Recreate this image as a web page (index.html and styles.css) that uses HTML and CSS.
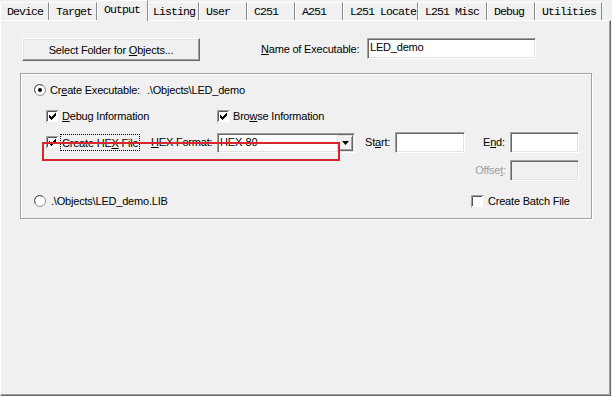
FILE: index.html
```html
<!DOCTYPE html>
<html>
<head>
<meta charset="utf-8">
<title>Options - Output</title>
<link rel="stylesheet" href="styles.css">
</head>
<body>
<div class="dialog">
  <div class="tabs">
    <div class="tab t-device">Device</div>
    <div class="tab t-target">Target</div>
    <div class="tab t-output active">Output</div>
    <div class="tab t-listing">Listing</div>
    <div class="tab t-user">User</div>
    <div class="tab t-c251">C251</div>
    <div class="tab t-a251">A251</div>
    <div class="tab t-locate">L251 Locate</div>
    <div class="tab t-misc">L251 Misc</div>
    <div class="tab t-debug">Debug</div>
    <div class="tab t-util">Utilities</div>
  </div>
  <div class="panel">
    <div class="top-row">
      <button class="btn">Select Folder for <u>O</u>bjects...</button>
      <span class="name-label"><u>N</u>ame of Executable:</span>
      <div class="field name-field">LED_demo</div>
    </div>
    <div class="group">
      <div class="radio-row">
        <svg class="radio" width="12" height="12" viewBox="0 0 12 12"><circle cx="6" cy="6" r="5.5" fill="#fff" stroke="#8f8f8f"/><path d="M1.5 8.5A5 5 0 0 1 8.5 1.5" fill="none" stroke="#5a5a5a"/><circle cx="6" cy="6" r="2" fill="#000"/></svg>
        <span class="exe-label">Cr<u>e</u>ate Executable:</span>
        <span>.\Objects\LED_demo</span>
      </div>
      <div class="opts">
        <div class="check c-debug">
          <svg width="13" height="13" viewBox="0 0 13 13"><rect x="1" y="1" width="11" height="11" fill="#fff"/><path d="M0.5 12.5V0.5H12.5" fill="none" stroke="#a0a0a0"/><path d="M1.5 11V1.5H11" fill="none" stroke="#555"/><path d="M3 5h1v3h-1zM4 6h1v3h-1zM5 7h1v3h-1zM6 6h1v3h-1zM7 5h1v3h-1zM8 4h1v3h-1zM9 3h1v3h-1z" fill="#000"/></svg>
          <span><u>D</u>ebug Information</span>
        </div>
        <div class="check c-browse">
          <svg width="13" height="13" viewBox="0 0 13 13"><rect x="1" y="1" width="11" height="11" fill="#fff"/><path d="M0.5 12.5V0.5H12.5" fill="none" stroke="#a0a0a0"/><path d="M1.5 11V1.5H11" fill="none" stroke="#555"/><path d="M3 5h1v3h-1zM4 6h1v3h-1zM5 7h1v3h-1zM6 6h1v3h-1zM7 5h1v3h-1zM8 4h1v3h-1zM9 3h1v3h-1z" fill="#000"/></svg>
          <span>Bro<u>w</u>se Information</span>
        </div>

        <div class="check focus c-hex">
          <svg width="13" height="13" viewBox="0 0 13 13"><rect x="1" y="1" width="11" height="11" fill="#fff"/><path d="M0.5 12.5V0.5H12.5" fill="none" stroke="#a0a0a0"/><path d="M1.5 11V1.5H11" fill="none" stroke="#555"/><path d="M3 5h1v3h-1zM4 6h1v3h-1zM5 7h1v3h-1zM6 6h1v3h-1zM7 5h1v3h-1zM8 4h1v3h-1zM9 3h1v3h-1z" fill="#000"/></svg>
          <span class="focus-label">Create HE<u>X</u> File</span>
        </div>
        <span class="lbl c-hexfmt"><u>H</u>EX Format:</span>
        <div class="combo">
          <span class="combo-text">HEX-80</span>
          <span class="combo-btn"><svg width="7" height="4" viewBox="0 0 7 4"><path d="M0 0h7L3.5 4z" fill="#000"/></svg></span>
        </div>
        <span class="lbl c-start">St<u>a</u>rt:</span>
        <div class="field small c-startf"></div>
        <span class="lbl c-end">E<u>n</u>d:</span>
        <div class="field small c-endf"></div>

        <span class="lbl disabled c-offset">Offse<u>t</u>:</span>
        <div class="field small off c-offf"></div>
      </div>
      <div class="lib-row">
        <div class="radio-item">
          <svg class="radio" width="12" height="12" viewBox="0 0 12 12"><circle cx="6" cy="6" r="5.5" fill="#fff" stroke="#8f8f8f"/><path d="M1.5 8.5A5 5 0 0 1 8.5 1.5" fill="none" stroke="#5a5a5a"/></svg>
          <span>.\Objects\LED_demo.LIB</span>
        </div>
        <div class="check batch">
          <svg width="13" height="13" viewBox="0 0 13 13"><rect x="1" y="1" width="11" height="11" fill="#fff"/><path d="M0.5 12.5V0.5H12.5" fill="none" stroke="#a0a0a0"/><path d="M1.5 11V1.5H11" fill="none" stroke="#555"/></svg>
          <span>Create Batch File</span>
        </div>
      </div>
    </div>
  </div>
  <div class="annotation"></div>
</div>
</body>
</html>
```

FILE: styles.css
```css
html, body {
  margin: 0;
  padding: 0;
}
body {
  width: 612px;
  height: 396px;
  overflow: hidden;
  background: #f0f0f0;
  color: #000;
  font-family: "Liberation Sans", Arial, sans-serif;
  font-size: 11px;
  letter-spacing: -0.2px;
}
u { text-decoration: underline; text-underline-offset: 1px; }

.dialog {
  position: relative;
  width: 612px;
  height: 396px;
}

/* tabs */
.tabs {
  display: flex;
  align-items: flex-end;
  height: 20px;
  position: relative;
  z-index: 1;
}
.tab {
  box-sizing: border-box;
  height: 18px;
  padding: 0 0 0 6px;
  line-height: 17px;
  font-family: "Liberation Mono", "DejaVu Sans Mono", monospace;
  font-size: 11.6px;
  letter-spacing: -0.96px;
  white-space: nowrap;
  border-top: 1px solid #fff;
  border-left: 1px solid #fff;
  border-right: 1px solid #8a8a8a;
  background: #f0f0f0;
}
.tab.active {
  height: 21px;
  margin-bottom: -1px;
}
.t-device { width: 49px; }
.t-target { width: 48px; }
.t-output { width: 51px; }
.t-listing { width: 51px; padding-left: 4px; }
.t-user { width: 48px; }
.t-c251 { width: 48px; }
.t-a251 { width: 48px; }
.t-locate { width: 75px; }
.t-misc { width: 69px; }
.t-debug { width: 48px; }
.t-util { width: 67px; }

/* panel */
.panel {
  box-sizing: border-box;
  width: 611px;
  height: 376px;
  border-top: 1px solid #fff;
  border-left: 1px solid #fff;
  border-right: 1px solid #696969;
  border-bottom: 1px solid #696969;
  box-shadow: inset -1px -1px 0 #a0a0a0;
  padding: 17px 0 0 19px;
}

.top-row {
  display: flex;
  align-items: flex-start;
  height: 23px;
}
.btn {
  box-sizing: border-box;
  width: 178px;
  height: 23px;
  margin: 0 0 0 2px;
  padding: 0;
  background: #f0f0f0;
  font: inherit;
  letter-spacing: inherit;
  color: #000;
  border: 1px solid;
  border-color: #fff #696969 #696969 #fff;
  box-shadow: inset -1px -1px 0 #a0a0a0, inset 1px 1px 0 #e3e3e3;
}
.name-label {
  margin-left: 61px;
  width: 106px;
  line-height: 23px;
}

.field {
  box-sizing: border-box;
  height: 21px;
  background: #fff;
  border: 1px solid;
  border-color: #a0a0a0 #fff #fff #a0a0a0;
  box-shadow: inset 1px 1px 0 #696969, inset -1px -1px 0 #e3e3e3;
  padding: 1px 0 0 2px;
  line-height: 15px;
}
.name-field { width: 169px; }
.field.off { background: #f0f0f0; }

/* group */
.group {
  box-sizing: border-box;
  width: 572px;
  height: 146px;
  margin-top: 12px;
  border: 1px solid #a0a0a0;
  box-shadow: inset 1px 1px 0 #fff, 1px 1px 0 #fff;
  padding: 6px 0 0 13px;
}
.radio-row {
  display: flex;
  align-items: center;
  height: 20px;
  gap: 4px;
}
.radio { display: block; flex: none; }
.exe-label { width: 93px; }

.opts {
  display: grid;
  grid-template-columns: 105px 66px 138px 40px 70px 45px 69px;
  grid-template-rows: 20px 21px 22px;
  row-gap: 6px;
  margin: 6px 0 0 12px;
}
.check {
  display: flex;
  align-items: center;
  gap: 3px;
}
.check svg { display: block; flex: none; }
.check.focus { gap: 1px; }
.focus-label {
  border: 1px dotted #000;
  padding: 1px 1px 0 1px;
  line-height: 14px;
}
.c-debug { grid-column: 1 / span 2; grid-row: 1; }
.c-browse { grid-column: 3 / span 3; grid-row: 1; }
.c-hex { grid-column: 1; grid-row: 2; }
.lbl { line-height: 21px; white-space: nowrap; }
.c-hexfmt { grid-column: 2; grid-row: 2; }
.combo {
  grid-column: 3;
  grid-row: 2;
  box-sizing: border-box;
  margin-top: 1px;
  height: 20px;
  display: flex;
  background: #fff;
  border: 1px solid;
  border-color: #a0a0a0 #fff #fff #a0a0a0;
  box-shadow: inset 1px 1px 0 #696969, inset -1px -1px 0 #e3e3e3;
  padding: 1px;
}
.combo-text {
  flex: 1;
  padding-left: 1px;
  line-height: 15px;
}
.combo-btn {
  box-sizing: border-box;
  width: 16px;
  height: 16px;
  display: flex;
  align-items: center;
  justify-content: center;
  background: #f0f0f0;
  border: 1px solid;
  border-color: #e3e3e3 #696969 #696969 #e3e3e3;
  box-shadow: inset 1px 1px 0 #fff, inset -1px -1px 0 #a0a0a0;
}
.combo-btn svg { display: block; }
.c-start { grid-column: 4; grid-row: 2; padding-left: 10px; }
.c-startf { grid-column: 5; grid-row: 2; }
.c-end { grid-column: 6; grid-row: 2; padding-left: 18px; }
.c-endf { grid-column: 7; grid-row: 2; }
.c-offset {
  grid-column: 6;
  grid-row: 3;
  align-self: end;
  text-align: right;
  padding-right: 4px;
}
.c-offf { grid-column: 7; grid-row: 3; align-self: end; }
.disabled { color: #a0a0a0; }

.lib-row {
  display: grid;
  grid-template-columns: 437px auto;
  align-items: center;
  height: 20px;
  margin-top: 10px;
}
.radio-item {
  display: flex;
  align-items: center;
  gap: 5px;
}
.batch { gap: 4px; }

/* red annotation frame drawn over the dialog */
.annotation {
  position: absolute;
  left: 42px;
  top: 142px;
  width: 298px;
  height: 19px;
  box-sizing: border-box;
  border: 2px solid #d7262d;
  pointer-events: none;
}
```
